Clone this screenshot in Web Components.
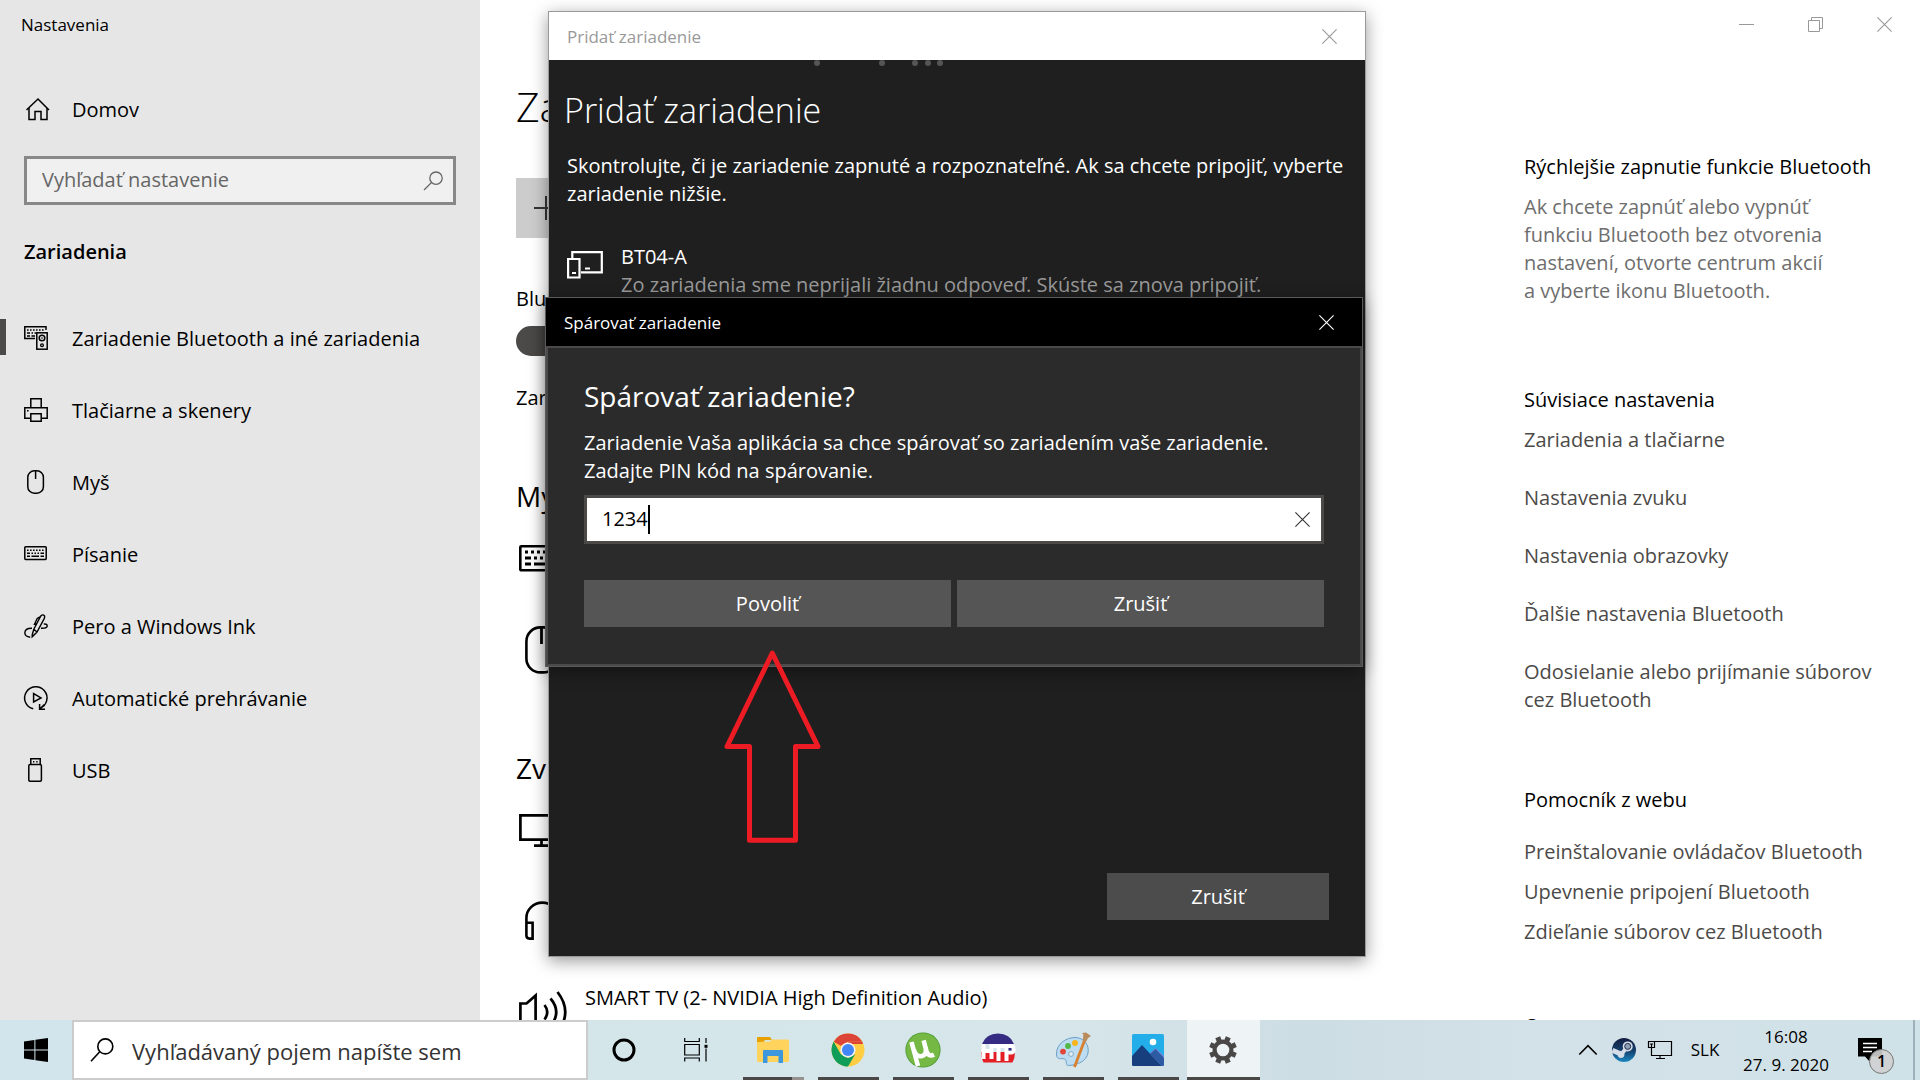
<!DOCTYPE html>
<html lang="sk">
<head>
<meta charset="utf-8">
<title>Nastavenia</title>
<style>
  html, body { margin: 0; height: 100%; overflow: hidden; }
  body { font: 20px/28px "Open Sans", "Noto Sans", sans-serif; color: #000; background: #fff; }
</style>
</head>
<body>
<desktop-shell>
  <settings-window></settings-window>
  <modal-window class="add" heading="Pridať zariadenie"><add-device></add-device></modal-window>
  <modal-window class="pair" dark heading="Spárovať zariadenie"><pair-form></pair-form></modal-window>
  <pointer-arrow></pointer-arrow>
  <task-bar slot="bar"></task-bar>
</desktop-shell>

<script>
const define = (name, html, extra) => {
  const t = document.createElement('template');
  t.innerHTML = `<style>
    *, *::before { box-sizing: border-box; }
    button, input { font: inherit; color: inherit; border: 0; padding: 0; margin: 0; background: none; border-radius: 0; outline: 0; }
    a { color: inherit; text-decoration: none; }
    h1, h2, h3, p, ul { margin: 0; padding: 0; font-size: inherit; font-weight: inherit; list-style: none; }
  </style>` + html;
  customElements.define(name, class extends HTMLElement {
    constructor() {
      super();
      this.attachShadow({ mode: 'open' }).append(t.content.cloneNode(true));
    }
    connectedCallback() { if (extra) extra.call(this, this.shadowRoot); }
  });
};

/* Icons: [viewBox width, viewBox height, markup]; drawn at their natural size. */
const line = (d, w = 1.5, more = '') => `<path d="${d}" fill="none" stroke="currentColor" stroke-width="${w}" ${more}/>`;
const ICONS = {
  home: [24, 24, line('M2.5 13 L14 2 L25 13', 1.5) + line('M5 11 V22.5 H11 V14.5 H17 V22.5 H23 V11', 1.5)],
  search: [20, 20, line('M1 19 L8.5 11.5', 1.3) + '<circle cx="13" cy="7.2" r="6.2" fill="none" stroke="currentColor" stroke-width="1.3"/>'],
  searchBig: [24, 24, line('M1 23.3 L9.5 14', 1.6) + '<circle cx="15.3" cy="8.4" r="7.5" fill="none" stroke="currentColor" stroke-width="1.6"/>'],
  devices: [24, 24, line('M22 4 V.8 H.8 V12.5 H11', 1.5) + line('M3 4 H21', 1.4, 'stroke-dasharray="1.6 1.4"') + line('M3 7 H6 M7.5 7 H9 M10.5 7 H12 M3 10 H6 M7.5 10 H11', 1.4) + '<rect x="12.8" y="6.8" width="10.4" height="16.4" fill="none" stroke="currentColor" stroke-width="1.5"/><circle cx="18" cy="12" r="2.8" fill="none" stroke="currentColor" stroke-width="1.5"/><circle cx="18" cy="12" r=".8"/><circle cx="18" cy="19.3" r="1.4" fill="none" stroke="currentColor" stroke-width="1.3"/>'],
  printer: [24, 24, line('M6.8 10 V.8 H17.2 V10 M6 20.2 H.8 V9.8 H23.2 V20.2 H18 M6.8 15.8 H17.2 V23.2 H6.8 Z', 1.5) + line('M3 12.8 H4.6')],
  mouse: [24, 24, '<rect x="3.8" y=".8" width="15.6" height="22.4" rx="6.5" fill="none" stroke="currentColor" stroke-width="1.5"/>' + line('M11.6 1 V9')],
  keyboard: [24, 24, '<rect x=".8" y="4.8" width="21.4" height="12.6" rx=".8" fill="none" stroke="currentColor" stroke-width="1.5"/>' + line('M3 8.2 H20', 1.5, 'stroke-dasharray="1.6 1.4"') + line('M3 11.2 H6 M7.5 11.2 H9 M10.5 11.2 H12 M13.5 11.2 H15 M16.5 11.2 H20 M3 14.3 H6 M7.5 14.3 H15 M16.5 14.3 H20', 1.5)],
  pen: [24, 24, line('M8.2 20.8 L9.8 15.2 L16.8 2 Q18.8 -.2 20.6 2 Q20.8 3.4 20.2 4.6 L13 18 L8.2 22.8 Z M12.5 9.6 L10.6 10 L13.2 4.4 L16.4 2.6 M9.8 15.2 L13 18', 1.4) + line('M8 14.2 Q1 14 .8 18.8 Q1 22.8 6.2 23.2 M19.8 10 Q23.4 9.6 23.2 12.2 Q22.6 14.4 17 14.2', 1.4)],
  autoplay: [24, 24, line('M9.2 22.8 A11.2 11.2 0 1 1 16 22.3 M15.6 18 V23.2 H21 M16 22.9 L20.4 18.5', 1.5) + line('M9.6 7.6 V16 L17 11.9 Z', 1.5)],
  usb: [24, 24, line('M6.8 6.4 V.8 H16.2 V6.4', 1.5) + '<rect x="4.8" y="6.6" width="12.6" height="16.6" rx="1.2" fill="none" stroke="currentColor" stroke-width="1.5"/>' + line('M9 3.8 H10.4 M12.2 3.8 H13.6', 1.4)],
  close: [15, 15, line('M.4 .4 L14.6 14.6 M14.6 .4 L.4 14.6', 1.1)],
  min: [15, 15, line('M0 7.5 H15', 1)],
  restore: [15, 15, line('M.5 3.5 H11.5 V14.5 H.5 Z M3.5 3.5 V.5 H14.5 V11.5 H11.5', 1)],
  plus: [24, 24, line('M0 12 H24 M12 0 V24', 2)],
  pairDev: [36, 28, line('M5.3 7 V1.2 H34.8 V21.3 H14', 2.2) + line('M1.1 8 H12.5 V26.5 H1.1 Z', 2.2) + line('M5 22 H9 M18 17.5 H23', 2)],
  bigKeyboard: [48, 48, '<rect x="1.3" y="12.3" width="44" height="24" rx="1" fill="none" stroke="currentColor" stroke-width="2.6"/>' + line('M6 18 H42', 3, 'stroke-dasharray="3 3"') + line('M6 24 H12 M15 24 H18 M21 24 H24 M27 24 H30 M33 24 H42 M6 30 H12 M15 30 H33 M36 30 H42', 3)],
  bigMouse: [48, 48, '<rect x="7.4" y="1.4" width="31" height="45" rx="14" fill="none" stroke="currentColor" stroke-width="2.6"/>' + line('M22.5 2 V18', 2.8)],
  monitor: [48, 48, line('M1.4 9.4 H43.6 V33.6 H1.4 Z M22.5 34 V39 M15 39.6 H30', 2.7)],
  phones: [48, 48, line('M7.4 25 V20 A16 15.4 0 0 1 39.4 20 V25 M7.4 24.8 H13.6 V40.6 H10.5 Q7.4 40.4 7.4 37.5 Z M39.4 24.8 H33.2 V40.6 H36.5 Q39.4 40.4 39.4 37.5 Z', 2.6)],
  speaker: [48, 48, line('M1.4 13.5 H7.5 L16.6 5.5 V38.5 L7.5 31.5 H1.4 Z', 2.7) + line('M25.5 15 Q31 22 25.5 29.5 M31.5 8.5 Q43 22 31.5 36 M38.5 2 Q54 22 38.5 42', 2.7)],
  start: [24, 24, '<path fill="currentColor" d="M0 3.6 L10.4 2 V11.5 H0 Z M11.4 1.8 L24 0 V11.5 H11.4 Z M0 12.5 H10.4 V22 L0 20.5 Z M11.4 12.5 H24 V24 L11.4 22.2 Z"/>'],
  cortana: [24, 24, '<circle cx="12" cy="12" r="10" fill="none" stroke="currentColor" stroke-width="3"/>'],
  taskview: [24, 24, line('M.7 0 V3.5 H15.3 V0 M.7 6.5 H15.3 V17 H.7 Z M.7 23.5 V20 H15.3 V23.5 M22 0 V5 M22 10.5 V23.5', 1.2) + '<rect x="20.5" y="6.8" width="3" height="3"/>'],
  folder: [36, 36, '<path fill="#e6a100" d="M2 6 Q2 5 3 5 H15 L17 8 H10 L8 11 H2 Z"/><path fill="#ffd35c" d="M2 11 Q2 10 3 10 L15 9.5 L17 7.6 H33 Q34 7.6 34 8.6 V29 Q34 30 33 30 H3 Q2 30 2 29 Z"/><path fill="#3c97dc" d="M8 19 Q8 18 9 18 H27 Q28 18 28 19 V31 H23.5 V24 H12.5 V31 H8 Z"/>'],
  chrome: [36, 36, '<circle cx="18" cy="18" r="16.5" fill="#ffcd42"/><path fill="#db4437" d="M3.7 9.8 A16.5 16.5 0 0 1 32.3 9.8 H18 L10.8 13.8 Z"/><path fill="#db4437" d="M18 9.8 H32.3 L33 12 H18 Z"/><path fill="#0f9d58" d="M3.7 9.8 A16.5 16.5 0 0 0 18 34.5 L25.2 22.2 L18 26 L10.8 22.2 Z"/><circle cx="18" cy="18" r="7.6" fill="#f2f2f2"/><circle cx="18" cy="18" r="6" fill="#4285f4"/>'],
  torrent: [36, 36, '<circle cx="18" cy="18" r="17.6" fill="#4d9a31"/><circle cx="18" cy="18" r="16.8" fill="#75b843"/><path fill="none" stroke="#fff" stroke-width="4.6" stroke-linecap="butt" d="M6.5 10 L13 34 M9 18 Q11 25.4 17 24 Q22 22.6 20.6 16 L18.6 8.4 M20.6 16 Q22.5 26 29 22.6"/>'],
  htp: [36, 36, '<path fill="#352b83" d="M2 12 Q6 1.5 18 1.5 Q30 1.5 34 12 Z"/><path fill="#e31e25" d="M1 20 H35 Q35 26 32.5 30.5 H3.5 Q1 26 1 20 Z"/><path fill="none" stroke="#fff" stroke-width="4" d="M3.5 12 V27 M11.5 12 V27 M3.5 19 H11.5 M12 14 H25 M18.5 13 V29 M26.5 29 V14 H31 Q33.6 14 33.6 17.3 Q33.6 20.6 31 20.6 H26.5"/><rect x="28.5" y="16" width="3" height="2.6" fill="#352b83"/>'],
  paint: [36, 36, '<path fill="#bcdcf2" stroke="#6e9fc6" d="M1.5 22 C1.5 11 12 5.5 20 5.5 C29 5.5 34.5 13 33 21 C31.5 29 23 33 13.5 33.5 C10 33.5 12.5 28.5 9.5 27 C6.5 25.6 1.5 29 1.5 22 Z"/><circle cx="16" cy="22" r="2.4" fill="#e2eef4" stroke="#86abc6"/><circle cx="8" cy="19.6" r="2.9" fill="#e0463a"/><circle cx="13" cy="14" r="2.9" fill="#53b748"/><circle cx="20" cy="11" r="3" fill="#f6b51b"/><path stroke="#d9802e" stroke-width="2.8" d="M19.5 35 L29.5 8.5"/><path fill="#b98a5a" d="M27.8 8.8 L28.4 2.5 L27 1 L31 .5 L36 4 L33 6 L31 10 Z"/>'],
  photos: [36, 36, '<rect x="2" y="2" width="32" height="32" rx="1.5" fill="#24aee9"/><path fill="#7a86d8" d="M20 21 L25.5 16 L34 24 V33 H24 Z"/><path fill="#173f7e" d="M2 24 L12 13 L31.5 34 H3.5 Q2 34 2 32.5 Z"/><path fill="#2c5aa3" d="M20 22 L25.5 17 L34 26 V32.5 Q34 34 32.5 34 H31.5 Z"/><circle cx="23" cy="10" r="3.3" fill="#fff"/>'],
  gear: [36, 36, '<circle cx="18" cy="18" r="8.4" fill="none" stroke="#4a4847" stroke-width="4.2"/><path stroke="#4a4847" stroke-width="5.2" d="' + [22.5,67.5,112.5,157.5,202.5,247.5,292.5,337.5].map(a => { const r = a * Math.PI / 180, c = Math.cos(r), s = Math.sin(r); return `M${18 + 9 * c} ${18 + 9 * s} L${18 + 13.8 * c} ${18 + 13.8 * s}`; }).join(' ') + '"/>'],
  chevron: [24, 24, line('M3.3 16.5 L12 7.6 L20.7 16.5', 1.6)],
  steam: [24, 24, '<defs><linearGradient id="g" x1="0" y1="0" x2="0" y2="1"><stop offset="0" stop-color="#131b3d"/><stop offset=".55" stop-color="#14426f"/><stop offset="1" stop-color="#1c8ac4"/></linearGradient></defs><circle cx="12" cy="12" r="12" fill="url(#g)"/><path d="M.4 12.4 L9 16" stroke="#d5dde6" stroke-width="5"/><path d="M9 16.4 L15.5 9" stroke="#d5dde6" stroke-width="4"/><circle cx="9" cy="16.6" r="3.4" fill="#d5dde6"/><circle cx="15.7" cy="8.4" r="5" fill="#d5dde6"/><circle cx="15.7" cy="8.4" r="3" fill="#91a0b3" stroke="#1c2c50"/>'],
  network: [24, 24, line('M6 3.5 H23.5 V17.5 H3.5 V10 M.5 3.5 H6.5 V9.5 H.5 Z M2 6 H5 M3.5 6 V9 M12 17.5 V20.5 M8 20.5 H17', 1.2)],
  notice: [24, 24, '<path d="M0 0 H24 V18.5 H14 L11.5 23.5 L7 18.5 H0 Z"/><path stroke="#fff" stroke-width="1.3" d="M5 5.5 H19 M5 9.5 H19 M5 13.5 H14"/>'],
};
customElements.define('ui-icon', class extends HTMLElement {
  constructor() { super(); this.attachShadow({ mode: 'open' }); }
  connectedCallback() {
    const [w, h, body] = ICONS[this.getAttribute('name')];
    this.shadowRoot.innerHTML = `<style>:host{display:block;flex:none;width:${w}px;height:${h}px}svg{display:block;overflow:visible}</style>
      <svg width="${w}" height="${h}" viewBox="0 0 ${w} ${h}" aria-hidden="true">${body}</svg>`;
  }
});
const makeIcon = name => {
  const i = document.createElement('ui-icon');
  i.setAttribute('name', name);
  return i;
};

define('desktop-shell', `<style>
    :host { display: flex; flex-direction: column; height: 100vh; }
    .area { position: relative; flex: 1; min-height: 0; overflow: hidden; display: flex; }
    ::slotted(settings-window) { flex: 1; }
    ::slotted(modal-window) { position: absolute; }
    ::slotted(.add) { left: 548px; top: 11px; width: 818px; height: 946px; }
    ::slotted(.pair) { left: 545px; top: 297px; width: 818px; height: 370px; }
    ::slotted(pointer-arrow) { position: absolute; left: 723px; top: 649px; }
  </style>
  <div class="area"><slot></slot></div><slot name="bar"></slot>`);

define('nav-item', `<style>
    :host { display: block; }
    a { display: flex; align-items: center; gap: 24px; height: 72px; padding-left: 24px; position: relative; }
    .text { padding-top: 2px; }
    :host([current]) a::before { content: ""; position: absolute; left: 0; top: 17px; width: 6px; height: 36px; background: #4c4a48; }
  </style>
  <a href="#"><span class="icon"></span><span class="text"><slot></slot></span></a>`,
  function (root) { root.querySelector('.icon').replaceChildren(makeIcon(this.getAttribute('icon'))); });

define('side-bar', `<style>
    :host { display: block; background: #e6e6e6; }
    .title { height: 48px; padding: 11px 21px; font-size: 17px; line-height: 28px; }
    .home { margin-top: 25px; }
    .find { display: flex; align-items: center; justify-content: space-between; margin: 11px 24px 0; height: 49px; padding: 0 10px 0 15px; border: 3px solid #888; background: #f0f0f0; color: #666; }
    .find input { flex: 1; min-width: 0; height: 30px; padding-bottom: 2px; }
    .find input::placeholder { color: #666; opacity: 1; }
    h2 { margin: 33px 24px 0; font-weight: 600; }
    nav { margin-top: 36px; }
  </style>
  <div class="title">Nastavenia</div>
  <nav-item class="home" icon="home">Domov</nav-item>
  <label class="find"><input type="text" placeholder="Vyhľadať nastavenie" aria-label="Vyhľadať nastavenie"><ui-icon name="search"></ui-icon></label>
  <h2>Zariadenia</h2>
  <nav>
    <nav-item icon="devices" current>Zariadenie Bluetooth a iné zariadenia</nav-item>
    <nav-item icon="printer">Tlačiarne a skenery</nav-item>
    <nav-item icon="mouse">Myš</nav-item>
    <nav-item icon="keyboard">Písanie</nav-item>
    <nav-item icon="pen">Pero a Windows Ink</nav-item>
    <nav-item icon="autoplay">Automatické prehrávanie</nav-item>
    <nav-item icon="usb">USB</nav-item>
  </nav>`);

define('device-row', `<style>
    :host { display: flex; gap: 18px; height: 92px; padding-left: 3px; }
    .icon { padding-top: 22px; }
    .name { padding-top: 16px; white-space: nowrap; }
  </style>
  <div class="icon"></div><div class="name"><slot></slot></div>`,
  function (root) { root.querySelector('.icon').replaceChildren(makeIcon(this.getAttribute('icon'))); });

define('device-page', `<style>
    :host { display: block; padding: 30px 0 0 36px; }
    h1 { font-size: 41px; line-height: 56px; font-weight: 300; }
    .plus { display: flex; align-items: center; width: 60px; height: 60px; padding-left: 18px; margin-top: 44px; background: #ccc; color: #333; }
    label { display: block; margin-top: 47px; }
    input { appearance: none; display: block; width: 66px; height: 30px; margin-top: 13px; border-radius: 15px; background: #4c4a48; }
    p { margin-top: 28px; }
    h2 { font-size: 28px; line-height: 32px; margin-top: 68px; }
    h2.sound { margin-top: 56px; }
  </style>
  <h1>Za</h1>
  <button class="plus" aria-label="+"><ui-icon name="plus"></ui-icon></button>
  <label for="bt">Blu</label><input type="checkbox" id="bt" checked>
  <p>Zar</p>
  <h2>My</h2>
  <device-row icon="bigKeyboard"></device-row>
  <device-row icon="bigMouse"></device-row>
  <h2 class="sound">Zv</h2>
  <device-row icon="monitor"></device-row>
  <device-row icon="phones"></device-row>
  <device-row icon="speaker">SMART TV (2- NVIDIA High Definition Audio)</device-row>`);

define('related-panel', `<style>
    :host { display: block; padding: 105px 36px 0 0; width: 396px; }
    section { margin-bottom: 72px; }
    section.tip { margin-bottom: 81px; }
    p { margin-top: 12px; max-width: 324px; color: #6e6e6e; }
    ul { display: flex; flex-direction: column; gap: 30px; margin-top: 12px; color: #4c4a48; }
    ul.help { gap: 12px; margin-top: 24px; }
    a { display: block; }
  </style>
  <section class="tip"><h3>Rýchlejšie zapnutie funkcie Bluetooth</h3>
    <p>Ak chcete zapnúť alebo vypnúť funkciu Bluetooth bez otvorenia nastavení, otvorte centrum akcií a&nbsp;vyberte ikonu Bluetooth.</p></section>
  <section><h3>Súvisiace nastavenia</h3>
    <ul><li><a href="#">Zariadenia a tlačiarne</a></li><li><a href="#">Nastavenia zvuku</a></li><li><a href="#">Nastavenia obrazovky</a></li>
    <li><a href="#">Ďalšie nastavenia Bluetooth</a></li><li><a href="#">Odosielanie alebo prijímanie súborov cez Bluetooth</a></li></ul></section>
  <section class="web"><h3>Pomocník z webu</h3>
    <ul class="help"><li><a href="#">Preinštalovanie ovládačov Bluetooth</a></li><li><a href="#">Upevnenie pripojení Bluetooth</a></li><li><a href="#">Zdieľanie súborov cez Bluetooth</a></li></ul></section>
  <h3>O</h3>
  <style>section.web { margin-bottom: 66px; }</style>`);

define('settings-window', `<style>
    :host { display: grid; grid-template-columns: 25% 1fr; background: #fff; min-width: 0; }
    .content { display: flex; flex-direction: column; min-width: 0; }
    .caption { display: flex; justify-content: flex-end; height: 48px; padding-right: 1px; color: #999; }
    .caption button { width: 69px; display: grid; place-items: center; }
    .cols { display: flex; }
    device-page { flex: 1; min-width: 0; }
  </style>
  <side-bar></side-bar>
  <div class="content">
    <div class="caption">
      <button aria-label="Minimalizovať"><ui-icon name="min"></ui-icon></button>
      <button aria-label="Obnoviť"><ui-icon name="restore"></ui-icon></button>
      <button aria-label="Zavrieť"><ui-icon name="close"></ui-icon></button>
    </div>
    <div class="cols"><device-page></device-page><related-panel></related-panel></div>
  </div>`);

define('modal-window', `<style>
    :host { display: flex; flex-direction: column; box-sizing: border-box; border: 1px solid #999; background: #1f1f1f; color: #fff; box-shadow: 0 4px 16px rgba(0,0,0,.4); }
    .bar { display: flex; align-items: center; justify-content: space-between; height: 48px; flex: none; padding: 1px 28px 0 18px; background: #fff; color: #999; font-size: 17px; }
    .body { flex: 1; display: flex; flex-direction: column; }
    :host([dark]) { border-color: #5a5a5a; }
    :host([dark]) .bar { background: #000; color: #fff; }
    :host([dark]) .body { border: 2px solid #4c4a48; background: #2b2b2b; }
    ::slotted(*) { flex: 1; }
  </style>
  <div class="bar"><span></span><button aria-label="Zavrieť"><ui-icon name="close"></ui-icon></button></div>
  <div class="body"><slot></slot></div>`,
  function (root) { root.querySelector('.bar span').textContent = this.getAttribute('heading'); });

define('add-device', `<style>
    :host { display: flex; flex-direction: column; }
    .dots { display: block; height: 6px; }
    h1 { margin: 20px 15px 0; font-size: 34px; line-height: 48px; font-weight: 300; }
    p { margin: 18px 18px 0; }
    .device { display: flex; gap: 18px; margin: 35px 18px 0; }
    .device ui-icon { margin-top: 8px; }
    .state { color: #999; }
    .cancel { align-self: flex-end; width: 222px; height: 47px; margin: auto 36px 36px 0; background: #4c4c4c; }
  </style>
  <svg class="dots" width="816" height="6" fill="#555"><circle cx="268" cy="3" r="3"/><circle cx="333" cy="3" r="3"/><circle cx="366" cy="3" r="3"/><circle cx="379" cy="3" r="3"/><circle cx="391" cy="3" r="3"/></svg>
  <h1>Pridať zariadenie</h1>
  <p>Skontrolujte, či je zariadenie zapnuté a rozpoznateľné. Ak sa chcete pripojiť, vyberte zariadenie nižšie.</p>
  <div class="device"><ui-icon name="pairDev"></ui-icon>
    <div><div>BT04-A</div><div class="state">Zo zariadenia sme neprijali žiadnu odpoveď. Skúste sa znova pripojiť.</div></div></div>
  <button class="cancel">Zrušiť</button>`);

define('pair-form', `<style>
    :host { display: block; padding: 28px 36px 0; }
    h2 { font-size: 28px; line-height: 40px; }
    label { display: block; margin-top: 13px; }
    .field { display: flex; align-items: center; height: 49px; margin-top: 10px; padding: 0 11px 0 15px; border: 3px solid #4c4a48; background: #fff; color: #000; }
    .field input { width: 4ch; height: 30px; padding-bottom: 2px; }
    .caret { width: 2px; height: 29px; background: #000; }
    .field button { margin-left: auto; color: #333; }
    .actions { display: grid; grid-template-columns: 1fr 1fr; gap: 6px; margin-top: 36px; }
    .actions button { height: 47px; background: #555; }
  </style>
  <h2>Spárovať zariadenie?</h2>
  <label for="pin">Zariadenie Vaša aplikácia sa chce spárovať so zariadením vaše zariadenie.<br>Zadajte PIN kód na spárovanie.</label>
  <div class="field"><input id="pin" type="text" value="1234"><span class="caret"></span><button aria-label="Vymazať"><ui-icon name="close"></ui-icon></button></div>
  <div class="actions"><button>Povoliť</button><button>Zrušiť</button></div>`);

define('pointer-arrow', `<style>:host { display: block; width: 98px; height: 195px; pointer-events: none; } svg { display: block; }</style>
  <svg width="98" height="195" fill="none" stroke="#ed1c24" stroke-width="5" stroke-linejoin="round"><path d="M49.3 4 L4 97.5 H26.5 V191.3 H72.5 V97.5 H95 Z"/></svg>`);

define('task-app', `<style>
    :host { display: block; width: 75px; }
    button { display: flex; align-items: center; justify-content: center; width: 100%; height: 60px; padding-right: 2px; position: relative; }
    button::before { content: ""; position: absolute; left: 7px; right: 7px; bottom: 0; height: 3px; background: #4a4847; }
    :host([stacked]) button::before { background: linear-gradient(90deg, #4a4847 80%, #94918f 80%); }
    :host([active]) button { background: #eef3f6; width: 73px; margin: 0 1px; }
    :host([active]) button::before { left: 0; right: 0; }
  </style>
  <button></button>`,
  function (root) {
    const b = root.querySelector('button');
    b.setAttribute('aria-label', this.getAttribute('icon'));
    b.replaceChildren(makeIcon(this.getAttribute('icon')));
  });

define('task-bar', `<style>
    :host { display: flex; height: 60px; flex: none; background: linear-gradient(90deg, #d2e4ec, #d5e6ea 40%, #d6e6ea 55%, #cddde4 68%, #d3e1e8 80%, #cfe2e7); color: #000; }
    .sq { width: 72px; display: grid; place-items: center; }
    .find { display: flex; align-items: center; gap: 18px; width: 516px; padding: 0 16px; border: 2px solid #ccc; background: #fff; }
    .find input { flex: 1; min-width: 0; height: 34px; padding-top: 2px; font-size: 22px; }
    .find input::placeholder { color: #333; opacity: 1; }
    .apps { display: flex; margin-left: 4px; }
    .tray { display: flex; align-items: center; margin-left: auto; font-size: 17px; text-align: center; }
    .tray button { height: 60px; }
    .s { width: 36px; display: grid; place-items: center; }
    .lang { width: 54px; }
    .tray .clock { width: 108px; padding-top: 1px; white-space: nowrap; }
    .note { width: 73px; padding-left: 18px; position: relative; }
    .badge { position: absolute; left: 29px; top: 29px; width: 25px; height: 25px; border: 1px solid #777; border-radius: 50%; background: rgba(208,208,208,.9); font-size: 16px; line-height: 23px; font-weight: 600; }
    .show { width: 7px; border-left: 2px solid #9fb0ba; }
  </style>
  <button class="sq" aria-label="Štart"><ui-icon name="start"></ui-icon></button>
  <label class="find"><ui-icon name="searchBig"></ui-icon><input type="text" placeholder="Vyhľadávaný pojem napíšte sem" aria-label="Vyhľadávaný pojem napíšte sem"></label>
  <button class="sq" aria-label="Cortana"><ui-icon name="cortana"></ui-icon></button>
  <button class="sq" aria-label="Zobrazenie úloh"><ui-icon name="taskview"></ui-icon></button>
  <div class="apps">
    <task-app icon="folder" stacked></task-app><task-app icon="chrome"></task-app><task-app icon="torrent"></task-app><task-app icon="htp"></task-app><task-app icon="paint"></task-app><task-app icon="photos"></task-app><task-app icon="gear" active></task-app>
  </div>
  <div class="tray">
    <button class="s" aria-label="Skryté ikony"><ui-icon name="chevron"></ui-icon></button>
    <button class="s" aria-label="Steam"><ui-icon name="steam"></ui-icon></button>
    <button class="s" aria-label="Sieť"><ui-icon name="network"></ui-icon></button>
    <button class="lang">SLK</button>
    <button class="clock">16:08<br>27. 9. 2020</button>
    <button class="note" aria-label="Oznámenia"><ui-icon name="notice"></ui-icon><span class="badge">1</span></button>
    <button class="show" aria-label="Plocha"></button>
  </div>`);
</script>
</body>
</html>
